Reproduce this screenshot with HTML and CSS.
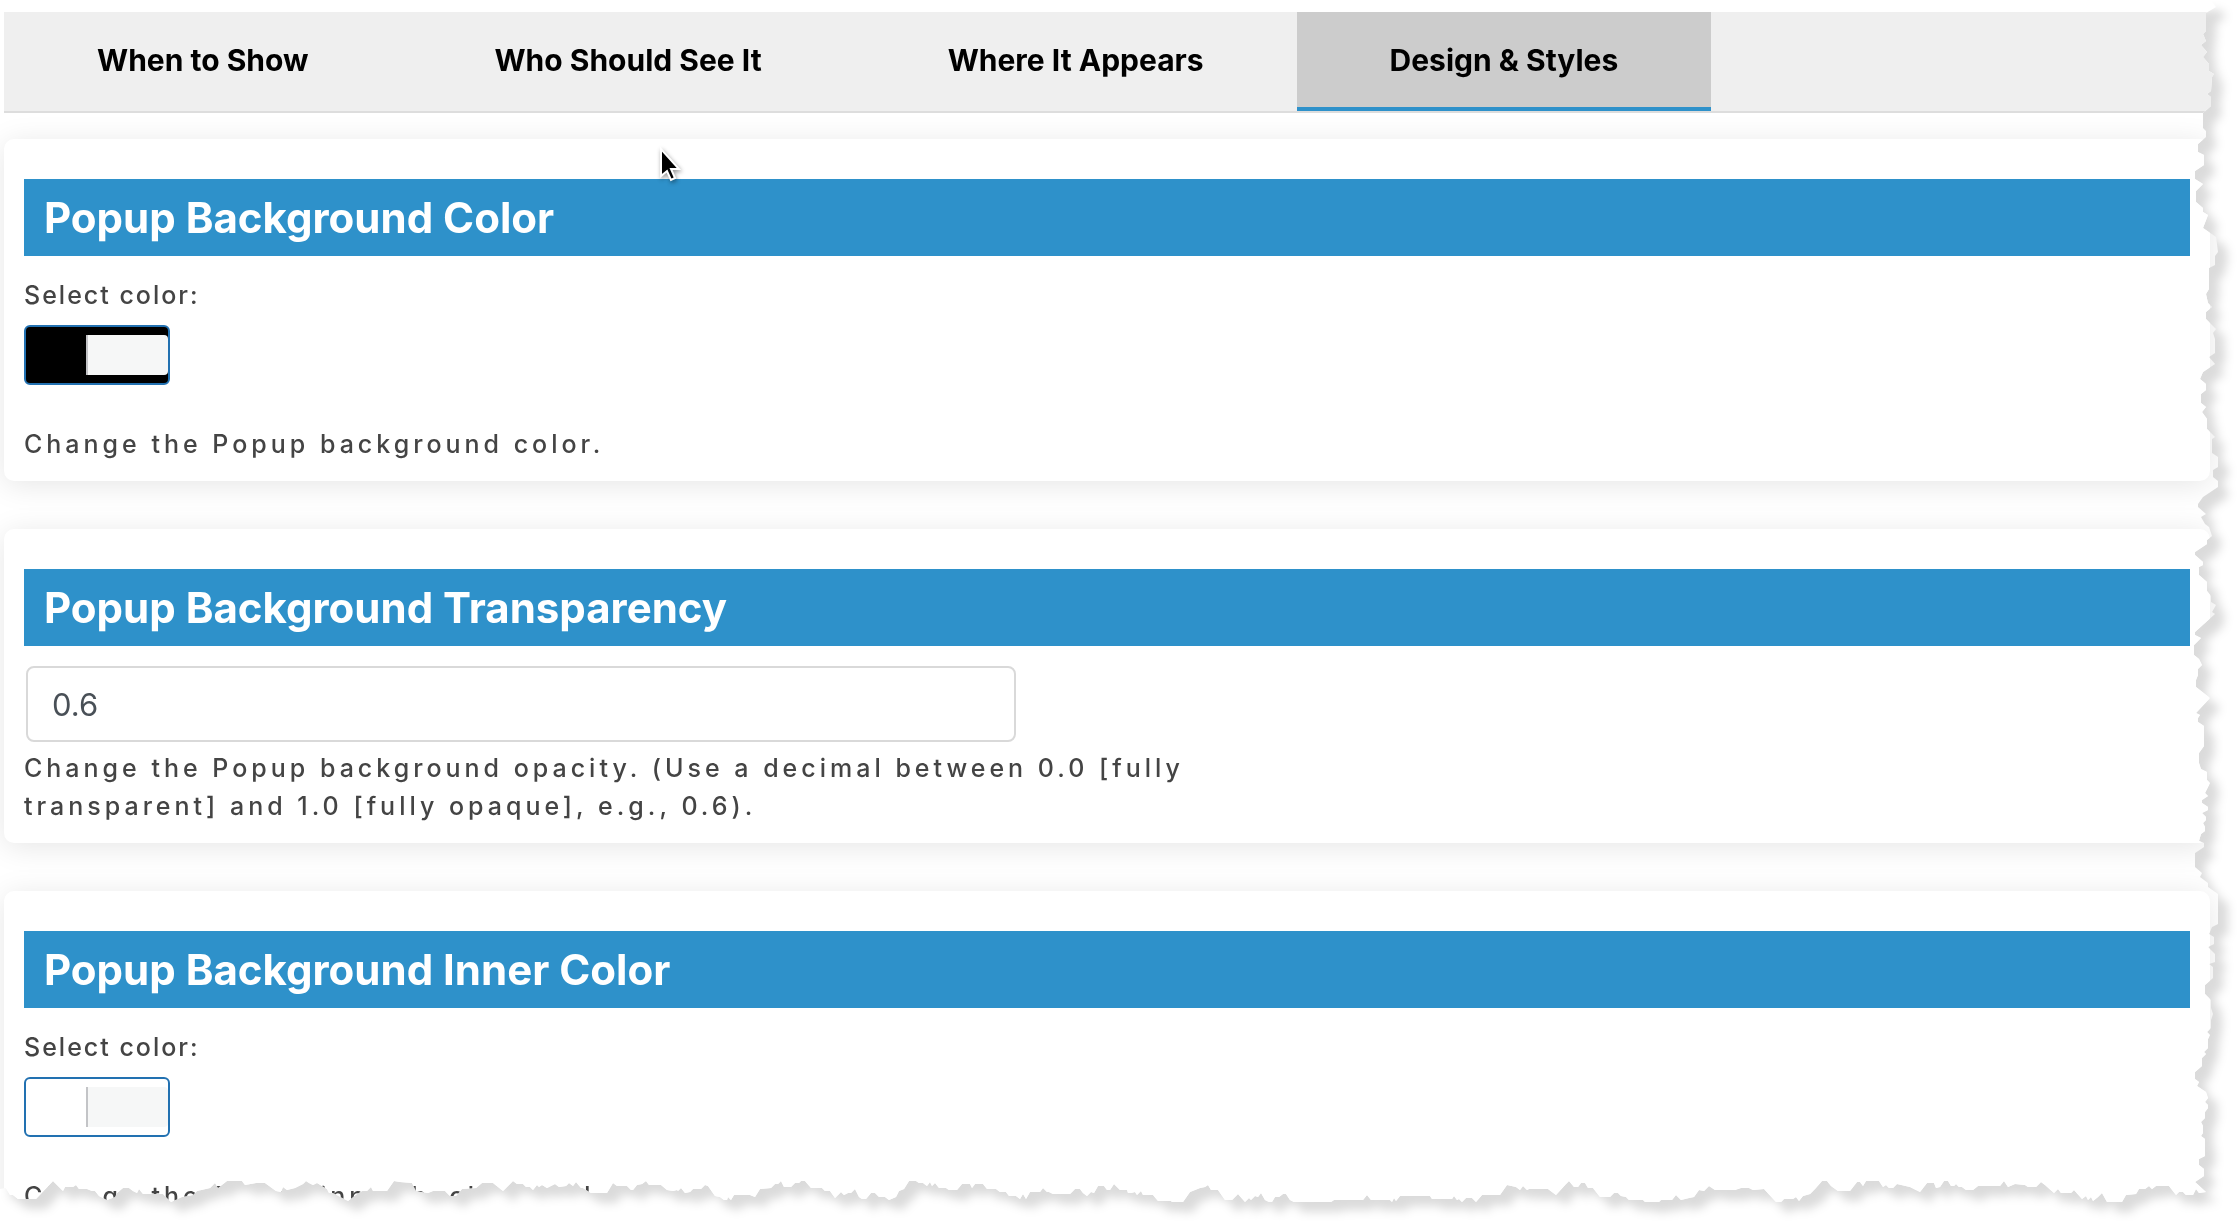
FILE: index.html
```html
<!DOCTYPE html>
<html lang="en">
<head>
    <meta charset="UTF-8">
    <meta name="viewport" content="width=device-width, initial-scale=1.0">
    <title>Popup Settings</title>
    <link rel="stylesheet" href="styles.css">
</head>
<body>

    <div class="sheet-shadow">
        <main class="sheet" id="sheet">

            <nav class="tabs">
                <button type="button" class="tab">When to Show</button>
                <button type="button" class="tab">Who Should See It</button>
                <button type="button" class="tab">Where It Appears</button>
                <button type="button" class="tab active">Design &amp; Styles</button>
            </nav>

            <section class="card">
                <h2>Popup Background Color</h2>
                <label class="label" for="bgColor">Select color:</label>
                <button type="button" id="bgColor" class="color-btn black"><span class="color-text"></span></button>
                <p class="help">Change the Popup background color.</p>
            </section>

            <section class="card">
                <h2 id="opacityTitle">Popup Background Transparency</h2>
                <input type="text" class="text-input" value="0.6" aria-labelledby="opacityTitle">
                <p class="help">Change the Popup background opacity. (Use a decimal between 0.0 [fully transparent] and 1.0 [fully opaque], e.g., 0.6).</p>
            </section>

            <section class="card">
                <h2>Popup Background Inner Color</h2>
                <label class="label" for="innerColor">Select color:</label>
                <button type="button" id="innerColor" class="color-btn white"><span class="color-text"></span></button>
                <p class="help">Change the Popup inner background color.</p>
            </section>

            <svg class="cursor" width="28" height="40" viewBox="0 0 28 40" aria-hidden="true">
                <path d="M4 3 V30 L10 25 L14 34 L18 32 L14 23 H22 Z" fill="#000" stroke="#fff" stroke-width="2"/>
            </svg>

        </main>
    </div>

    <script src="torn.js"></script>
</body>
</html>
```
FILE: styles.css
```css
* {
    box-sizing: border-box;
}

body {
    margin: 0;
    font-family: Inter, "Liberation Sans", sans-serif;
    background-color: #fff;
    color: #444;
}

/* the shadow sits outside the element that gets clipped */
.sheet-shadow {
    height: 100vh;
    overflow: hidden;
    filter: drop-shadow(10px 10px 5px rgba(0, 0, 0, 0.14));
}

.sheet {
    position: relative;
    height: 100vh;
    padding: 12px 28px 0 4px;
    overflow: hidden;
    background-color: #fff;
}

.tabs {
    display: flex;
    margin-right: -28px;
    margin-bottom: 26px;
    background-color: #efefef;
    border-bottom: 2px solid #ddd;
}

.tab {
    height: 99px;
    padding: 0 93px;
    border: 0;
    border-bottom: 4px solid transparent;
    background: none;
    font: 700 30px/40px Inter, "Liberation Sans", sans-serif;
    color: #000;
    cursor: pointer;
}

.tab.active {
    background-color: #ccc;
    border-bottom-color: #2e91ca;
}

.card {
    margin-bottom: 48px;
    padding: 40px 20px 18px;
    border-radius: 10px;
    background-color: #fff;
    box-shadow: 0 4px 30px rgba(0, 0, 0, 0.1);
}

.card h2 {
    margin: 0 0 20px;
    padding: 10px 20px;
    background-color: #2e91ca;
    color: #fff;
    font-size: 42px;
    font-weight: 700;
    line-height: 57px;
}

.label {
    display: block;
    margin-bottom: 11px;
    font-size: 25px;
    font-weight: 500;
    line-height: 38px;
    letter-spacing: 2px;
}

.color-btn {
    display: flex;
    align-items: center;
    justify-content: flex-end;
    width: 146px;
    height: 60px;
    margin-bottom: 40px;
    padding: 0;
    border: 2px solid #2271b1;
    border-radius: 6px;
    cursor: pointer;
}

.color-btn.black {
    background-color: #000;
}

.color-btn.white {
    background-color: #fff;
}

.color-text {
    width: 82px;
    height: 40px;
    border-left: 2px solid #c3c4c7;
    border-radius: 0 4px 4px 0;
    background-color: #f6f7f7;
}

.text-input {
    display: block;
    width: 990px;
    max-width: 100%;
    height: 76px;
    margin: 0 2px 7px;
    padding: 0 24px;
    border: 2px solid #d9d9d9;
    border-radius: 8px;
    background-color: #fff;
    color: #495057;
    font: 400 31px/40px Inter, "Liberation Sans", sans-serif;
}

.help {
    max-width: 1240px;
    margin: 0;
    font-size: 25px;
    font-weight: 500;
    line-height: 38px;
    letter-spacing: 4px;
}

.cursor {
    position: absolute;
    left: 657px;
    top: 146px;
    filter: drop-shadow(1px 2px 2px rgba(0, 0, 0, 0.4));
}
```
FILE: torn.js
```js
// right edge, top to bottom: [distance from the right side, y]
const rightEdge = [
    [28, 0], [22, 7], [32, 13], [32, 31], [35, 34], [32, 41], [37, 45], [31, 52], [35, 57], [29, 64], [29, 71],
    [24, 74], [26, 77], [27, 91], [31, 94], [27, 97], [27, 106], [35, 113], [35, 128], [32, 131], [32, 137],
    [40, 144], [40, 152], [34, 155], [34, 165], [43, 171], [43, 179], [35, 184], [42, 191], [42, 202], [35, 208],
    [35, 212], [30, 215], [35, 228], [22, 237], [20, 252], [23, 256], [23, 265], [29, 268], [29, 289], [32, 294],
    [30, 303], [26, 307], [32, 312], [32, 319], [22, 329], [25, 333], [23, 339], [23, 353], [29, 357], [23, 364],
    [35, 372], [38, 379], [32, 384], [32, 390], [37, 394], [37, 403], [32, 407], [36, 412], [31, 419], [31, 429],
    [23, 437], [26, 439], [26, 453], [20, 457], [20, 467], [25, 470], [25, 477], [20, 481], [20, 487], [35, 497],
    [40, 504], [40, 507], [32, 514], [37, 517], [33, 524], [29, 527], [26, 536], [31, 540], [31, 544], [43, 552],
    [43, 555], [35, 562], [35, 565], [39, 567], [39, 575], [31, 582], [31, 591], [27, 596], [27, 602], [22, 605],
    [26, 612], [23, 614], [43, 632], [43, 635], [37, 638], [44, 645], [44, 655], [39, 659], [36, 665], [40, 669],
    [40, 675], [42, 680], [42, 687], [28, 698], [42, 713], [38, 715], [40, 718], [40, 722], [34, 726], [34, 746],
    [39, 753], [39, 763], [37, 769], [31, 772], [31, 780], [28, 783], [33, 793], [30, 796], [36, 800], [36, 803],
    [30, 807], [30, 810], [36, 813], [32, 817], [32, 820], [35, 823], [33, 827], [33, 831], [37, 834], [39, 841],
    [34, 843], [34, 847], [43, 853], [43, 867], [36, 873], [38, 877], [30, 883], [30, 887],
    [20, 894], [20, 924], [26, 927], [29, 934], [24, 937], [24, 944], [30, 947], [23, 954], [23, 962], [29, 964],
    [25, 967], [25, 978], [33, 985], [33, 994], [27, 1000], [27, 1008], [25, 1014], [27, 1020], [27, 1028],
    [31, 1032], [28, 1035], [30, 1039], [30, 1048], [34, 1052], [32, 1054], [36, 1058], [36, 1066], [43, 1072],
    [43, 1079], [39, 1082], [41, 1086], [32, 1092], [30, 1098], [33, 1102], [30, 1105], [30, 1108], [33, 1112],
    [33, 1118], [37, 1122], [35, 1126], [35, 1133], [37, 1136], [33, 1139], [33, 1156], [39, 1159], [39, 1165],
    [34, 1169], [34, 1176], [43, 1182], [32, 1192]
];

// bottom edge, left to right: [x, distance from the bottom]
const bottomEdge = [
    [0, 35], [6, 36], [10, 29], [13, 29], [18, 25], [36, 25], [53, 43], [63, 33], [65, 37], [73, 37], [76, 39],
    [79, 35], [87, 35], [92, 33], [95, 33], [99, 28], [107, 24], [115, 27], [117, 31], [123, 36], [129, 36],
    [133, 33], [137, 31], [139, 35], [143, 30], [163, 30], [171, 22], [182, 27], [193, 29], [197, 33], [210, 36],
    [215, 41], [218, 36], [227, 43], [242, 43], [245, 39], [256, 41], [265, 41], [276, 33], [281, 32], [283, 37],
    [287, 34], [295, 36], [303, 40], [306, 43], [309, 41], [313, 39], [317, 41], [327, 35], [329, 31], [333, 31],
    [348, 23], [357, 30], [362, 33], [367, 33], [371, 37], [373, 33], [387, 33], [394, 43], [400, 42], [412, 41],
    [416, 33], [428, 31], [433, 33], [445, 33], [450, 28], [456, 28], [462, 35], [476, 36], [482, 41], [493, 41],
    [503, 33], [513, 43], [517, 40], [523, 40], [526, 37], [530, 37], [533, 34], [537, 39], [539, 37], [542, 39],
    [547, 36], [555, 40], [559, 37], [566, 38], [569, 41], [573, 38], [576, 42], [581, 36], [583, 36], [591, 31],
    [607, 31], [613, 41], [617, 38], [627, 38], [631, 34], [633, 34], [637, 39], [642, 40], [646, 43], [649, 39],
    [661, 39], [667, 34], [673, 33], [677, 34], [678, 33], [681, 36], [685, 31], [690, 32], [693, 35], [701, 35],
    [705, 39], [708, 38], [715, 28], [720, 27], [724, 24], [727, 24], [728, 27], [731, 24], [734, 29], [750, 29],
    [755, 27], [760, 35], [771, 36], [775, 40], [778, 40], [781, 43], [784, 37], [791, 37], [795, 41], [799, 41],
    [801, 43], [805, 43], [811, 36], [822, 36], [825, 33], [830, 33], [835, 26], [841, 32], [844, 29], [848, 31],
    [851, 31], [855, 35], [859, 27], [862, 25], [866, 25], [871, 31], [875, 31], [879, 27], [885, 27], [889, 24],
    [896, 27], [899, 33], [904, 35], [909, 43], [916, 43], [919, 41], [923, 41], [927, 38], [930, 42], [932, 38],
    [935, 41], [939, 36], [946, 36], [949, 34], [957, 34], [962, 40], [970, 40], [972, 36], [975, 40], [983, 40],
    [987, 35], [996, 35], [1000, 32], [1006, 32], [1009, 28], [1016, 28], [1020, 25], [1023, 30], [1026, 25],
    [1030, 32], [1040, 32], [1043, 36], [1047, 32], [1049, 32], [1053, 30], [1070, 30], [1075, 35], [1080, 35],
    [1083, 31], [1087, 28], [1091, 32], [1094, 31], [1098, 38], [1104, 38], [1107, 34], [1110, 34], [1114, 40],
    [1120, 34], [1127, 34], [1128, 31], [1131, 31], [1135, 32], [1137, 29], [1141, 33], [1143, 29], [1153, 29],
    [1158, 23], [1171, 23], [1172, 22], [1183, 22], [1190, 32], [1200, 36], [1205, 37], [1208, 39], [1211, 34],
    [1218, 34], [1225, 24], [1232, 24], [1238, 30], [1245, 22], [1249, 26], [1251, 24], [1255, 28], [1258, 27],
    [1261, 31], [1265, 24], [1269, 22], [1272, 22], [1275, 27], [1279, 27], [1283, 30], [1286, 30], [1290, 24],
    [1294, 22], [1331, 22], [1334, 24], [1363, 24], [1367, 29], [1371, 24], [1390, 24], [1392, 22], [1394, 26],
    [1396, 23], [1400, 28], [1430, 28], [1432, 25], [1452, 25], [1454, 28], [1457, 24], [1459, 25], [1462, 22],
    [1466, 26], [1472, 26], [1476, 22], [1482, 29], [1500, 29], [1507, 39], [1516, 37], [1520, 34], [1523, 38],
    [1527, 34], [1529, 35], [1548, 35], [1556, 29], [1566, 40], [1569, 43], [1574, 37], [1578, 37], [1581, 41],
    [1585, 41], [1588, 36], [1593, 36], [1600, 27], [1610, 27], [1614, 31], [1618, 31], [1621, 28], [1626, 27],
    [1629, 24], [1643, 24], [1645, 22], [1659, 22], [1661, 24], [1672, 24], [1676, 29], [1681, 24], [1689, 26],
    [1694, 27], [1699, 34], [1704, 33], [1709, 38], [1715, 34], [1735, 34], [1741, 36], [1749, 36], [1753, 34],
    [1764, 35], [1776, 22], [1781, 22], [1784, 25], [1793, 25], [1796, 27], [1799, 23], [1803, 28], [1810, 30],
    [1815, 35], [1822, 43], [1827, 43], [1831, 38], [1838, 33], [1850, 33], [1857, 42], [1860, 42], [1863, 38],
    [1866, 43], [1879, 43], [1883, 37], [1886, 39], [1889, 36], [1893, 36], [1897, 40], [1910, 37], [1920, 32],
    [1927, 41], [1934, 41], [1936, 36], [1940, 37], [1944, 43], [1948, 43], [1951, 38], [1954, 38], [1956, 40],
    [1959, 37], [1962, 37], [1966, 34], [1973, 34], [1978, 38], [2000, 38], [2004, 43], [2008, 37], [2015, 40],
    [2025, 39], [2028, 37], [2036, 37], [2041, 42], [2045, 39], [2054, 31], [2058, 35], [2061, 31], [2071, 31],
    [2074, 34], [2082, 25], [2086, 28], [2088, 24], [2091, 27], [2093, 23], [2098, 27], [2102, 31], [2107, 22],
    [2122, 22], [2126, 29], [2136, 30], [2139, 35], [2145, 35], [2149, 38], [2152, 35], [2156, 38], [2169, 38],
    [2176, 29], [2179, 32], [2183, 32], [2186, 29], [2193, 29], [2196, 35], [2199, 31]
];

function tearSheet() {
    const sheet = document.getElementById('sheet');
    const width = sheet.clientWidth;
    const height = sheet.clientHeight;
    const points = ['-40px 0px'];

    rightEdge
        .filter(([, y]) => y < height - 30)
        .forEach(([inset, y]) => points.push(`${width - inset}px ${y}px`));
    bottomEdge
        .filter(([x]) => x < width - 36)
        .reverse()
        .forEach(([x, up]) => points.push(`${x}px ${height - up}px`));
    points.push(`-40px ${height - 35}px`);

    sheet.style.clipPath = `polygon(${points.join(', ')})`;
}

tearSheet();
window.addEventListener('resize', tearSheet);
```
